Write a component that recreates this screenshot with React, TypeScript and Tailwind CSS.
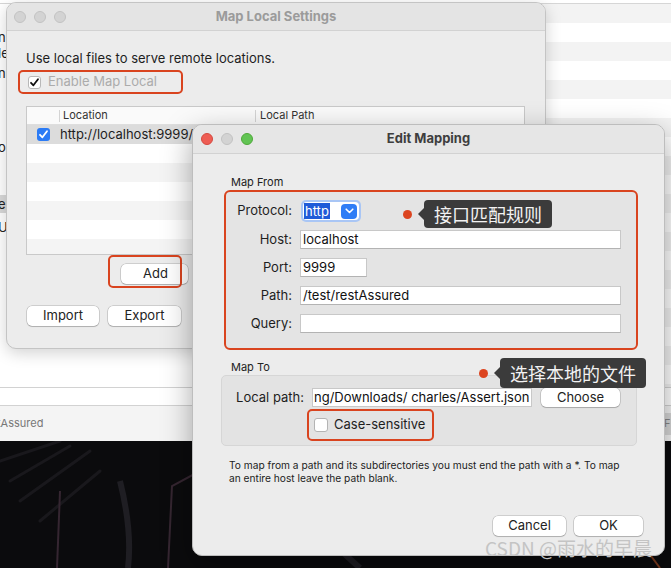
import React from "react";

const RED = "border-[#d9441f]";

function MacButton({ label, className }: { label: string; className: string }) {
  return (
    <div
      className={`flex items-center justify-center rounded-[5px] bg-white text-[13px] text-[#222] shadow-[0_0_0_0.5px_rgba(0,0,0,0.25),0_1px_1px_rgba(0,0,0,0.15)] ${className}`}
    >
      {label}
    </div>
  );
}

function CheckMark({ color }: { color: string }) {
  return (
    <svg width="11" height="11" viewBox="0 0 11 11">
      <path d="M2 5.8 L4.4 8.3 L9 2.2" fill="none" stroke={color} strokeWidth="1.8" strokeLinecap="round" strokeLinejoin="round" />
    </svg>
  );
}

function BackgroundApp() {
  const stripes = Array.from({ length: 21 });
  return (
    <div className="absolute inset-0 flex flex-col">
      <div className="h-[4px] shrink-0 border-b border-[#d6d6d6] bg-white" />
      <div className="flex h-[383px] shrink-0 overflow-hidden">
        <div className="relative w-[200px] shrink-0 bg-white text-[13px] leading-[16px] text-[#222]">
          <div className="flex flex-col pt-[25px]">
            <span className="-ml-[2px] h-[16px]">n</span>
            <span className="-ml-[2px] h-[16px]">le</span>
            <span className="-ml-[2px] mt-[4px] h-[16px]">n</span>
            <span className="-ml-[2px] mt-[58px] h-[16px]">o</span>
            <span className="-ml-[2px] mt-[40px] flex h-[18px] items-center bg-[#d9d9d9]">er</span>
            <span className="-ml-[2px] mt-[6px] h-[16px]">U:</span>
          </div>
        </div>
        <div className="flex flex-1 flex-col">
          {stripes.map((_, i) => (
            <div key={i} className={`h-[19px] shrink-0 ${i % 2 === 0 ? "bg-[#f3f3f3]" : "bg-white"}`} />
          ))}
        </div>
      </div>
      <div className="h-[19px] shrink-0 border-y border-[#d2d2d2] bg-white" />
      <div className="relative flex h-[35px] shrink-0 items-center justify-between bg-[#f4f4f4] text-[11px] text-[#777]">
        <span className="-ml-[3px]">tAssured</span>
        <span className="flex h-[22px] w-[8px] items-center bg-[#d8d8d8] pl-[1px] text-[#888]">F</span>
      </div>
      <div className="relative flex-1 bg-[#0b0b0d]">
        <svg className="absolute inset-0" width="671" height="127" viewBox="0 0 671 127">
          <g stroke="#19181c" strokeWidth="3" fill="none" strokeLinecap="round">
            <path d="M10 40 L70 5" />
            <path d="M20 60 L90 10" />
            <path d="M0 20 L60 0" />
            <path d="M40 80 L100 30" />
            <path d="M220 40 C260 10 300 0 360 5" />
            <path d="M230 60 C270 30 320 20 380 30" />
            <path d="M250 80 C290 50 340 50 400 60" />
            <path d="M240 100 C270 80 300 90 330 110" />
            <path d="M260 30 L200 0" />
            <path d="M400 90 C440 60 480 50 540 60" />
            <path d="M420 110 C460 90 500 80 560 100" />
            <path d="M440 70 L500 30" />
            <path d="M460 60 L520 20" />
            <path d="M540 40 L600 10" />
            <path d="M560 60 L630 30" />
          </g>
          <g stroke="#1f1e23" strokeWidth="6" fill="none">
            <path d="M300 60 C320 90 340 110 360 127" />
            <path d="M120 40 C130 80 130 110 128 127" />
          </g>
          <g stroke="#352631" strokeWidth="2" fill="none">
            <path d="M57 127 L60 50" />
            <path d="M168 127 L172 45 L200 30" />
          </g>
          <path d="M640 100 L660 127" stroke="#7a3a1e" strokeWidth="2" />
        </svg>
      </div>
    </div>
  );
}

function MapLocalWindow() {
  const rows = Array.from({ length: 7 });
  return (
    <div className="absolute left-[6px] top-[2px] flex h-[347px] w-[540px] flex-col overflow-hidden rounded-[10px] border border-[#c4c4c4] bg-[#ececec] shadow-[0_4px_16px_rgba(0,0,0,0.18)]">
      <div className="relative flex h-[28px] shrink-0 items-center border-b border-[#d2d2d2] bg-[#e4e4e4] pl-[7px]">
        <div className="flex gap-[8px]">
          <span className="h-[12px] w-[12px] rounded-full border border-[#c2c2c2] bg-[#d3d3d3]" />
          <span className="h-[12px] w-[12px] rounded-full border border-[#c2c2c2] bg-[#d3d3d3]" />
          <span className="h-[12px] w-[12px] rounded-full border border-[#c2c2c2] bg-[#d3d3d3]" />
        </div>
        <div className="absolute inset-0 flex items-center justify-center text-[13px] font-bold text-[#9b9b9b]">
          Map Local Settings
        </div>
      </div>
      <div className="flex flex-col pl-[19px]">
        <div className="mt-[19px] h-[16px] text-[13px] leading-[16px] text-[#1e1e1e]">
          Use local files to serve remote locations.
        </div>
        <div className={`-ml-[8px] mt-[4px] flex h-[24px] w-[165px] items-center rounded-[5px] border-2 ${RED} pl-[8px]`}>
          <span className="flex h-[13px] w-[13px] items-center justify-center rounded-[3px] border border-[#b8b8b8] bg-white">
            <CheckMark color="#111" />
          </span>
          <span className="ml-[7px] text-[13px] text-[#ababab]">Enable Map Local</span>
        </div>
        <div className="mt-[12px] flex h-[149px] w-[499px] flex-col overflow-hidden border border-[#c9c9c9] bg-white">
          <div className="flex h-[18px] shrink-0 items-center border-b border-[#dedede] bg-[#fafafa] text-[11px] text-[#333]">
            <span className="h-[12px] w-[33px] border-r border-[#d4d4d4]" />
            <span className="flex h-[12px] w-[196px] items-center border-r border-[#d4d4d4] pl-[3px]">Location</span>
            <span className="pl-[4px]">Local Path</span>
          </div>
          <div className="flex h-[19px] shrink-0 items-center bg-[#dcdcdc] text-[13px] text-[#1e1e1e]">
            <span className="flex w-[33px] justify-center">
              <span className="flex h-[13px] w-[13px] items-center justify-center rounded-[3px] bg-[#2b7bf5]">
                <CheckMark color="#fff" />
              </span>
            </span>
            <span className="whitespace-nowrap">http://localhost:9999/test/restAssured</span>
          </div>
          {rows.map((_, i) => (
            <div key={i} className={`h-[19px] shrink-0 ${i % 2 === 0 ? "bg-white" : "bg-[#f4f4f4]"}`} />
          ))}
        </div>
        <div className="relative h-[33px] shrink-0">
          <div className="pl-[95px] pt-[9px]">
            <MacButton label="Add" className="h-[20px] w-[67px] pl-[2px]" />
          </div>
          <div className={`absolute left-[82px] top-0 h-[33px] w-[74px] rounded-[5px] border-2 ${RED}`} />
        </div>
        <div className="ml-[1px] mt-[18px] flex gap-[9px]">
          <MacButton label="Import" className="h-[20px] w-[72px]" />
          <MacButton label="Export" className="h-[20px] w-[73px]" />
        </div>
      </div>
    </div>
  );
}

function FieldRow({ label, width, value }: { label: string; width: string; value: string }) {
  return (
    <div className="flex h-[19px] items-center">
      <span className="w-[66px] text-right text-[13px] text-[#1e1e1e]">{label}</span>
      <div
        className={`ml-[8px] flex h-[19px] items-center border border-[#c8c8c8] border-b-[#b3b3b3] bg-white pl-[2px] text-[13px] text-[#111] ${width}`}
      >
        {value}
      </div>
    </div>
  );
}

function EditMappingWindow() {
  return (
    <div className="absolute left-[192px] top-[124px] flex h-[432px] w-[473px] flex-col overflow-hidden rounded-[10px] border border-[#bdbdbd] bg-[#ececec] shadow-[0_10px_30px_rgba(0,0,0,0.35)]">
      <div className="relative flex h-[29px] shrink-0 items-center border-b border-[#d2d2d2] bg-[#e6e6e6] pl-[8px]">
        <div className="flex gap-[8px]">
          <span className="h-[12px] w-[12px] rounded-full border border-[#d4493f] bg-[#ee5d54]" />
          <span className="h-[12px] w-[12px] rounded-full border border-[#c2c2c2] bg-[#d3d3d3]" />
          <span className="h-[12px] w-[12px] rounded-full border border-[#4fa83a] bg-[#62c454]" />
        </div>
        <div className="absolute inset-0 flex items-center justify-center text-[13px] font-bold text-[#3e3e3e]">
          Edit Mapping
        </div>
      </div>
      <div className="flex flex-col">
        <div className="ml-[38px] mt-[22px] h-[13px] text-[11px] leading-[13px] text-[#222]">Map From</div>
        <div className={`ml-[31px] mt-[1px] flex h-[160px] w-[414px] flex-col rounded-[6px] border-2 ${RED} bg-[#e4e4e4] pt-[8px]`}>
          <div className="flex h-[22px] items-center">
            <span className="w-[66px] text-right text-[13px] text-[#1e1e1e]">Protocol:</span>
            <div className="ml-[9px] flex h-[22px] w-[60px] items-center rounded-[5px] bg-[#a9c6f5] p-[2px]">
              <div className="flex h-[18px] w-full items-center rounded-[4px] bg-white pl-[1px] pr-[2px]">
                <span className="flex h-[16px] items-center bg-[#1f5bd8] px-[1px] text-[13px] leading-[16px] text-white">
                  http
                </span>
                <span className="ml-auto flex h-[15px] w-[16px] items-center justify-center rounded-[4px] bg-[#2f7df6]">
                  <svg width="9" height="6" viewBox="0 0 9 6">
                    <path d="M1.2 1.2 L4.5 4.5 L7.8 1.2" fill="none" stroke="#fff" strokeWidth="1.6" strokeLinecap="round" strokeLinejoin="round" />
                  </svg>
                </span>
              </div>
            </div>
          </div>
          <div className="mt-[8px] flex flex-col gap-[9px]">
            <FieldRow label="Host:" width="w-[321px]" value="localhost" />
            <FieldRow label="Port:" width="w-[67px]" value="9999" />
            <FieldRow label="Path:" width="w-[321px]" value="/test/restAssured" />
            <FieldRow label="Query:" width="w-[321px]" value="" />
          </div>
        </div>
        <div className="ml-[38px] mt-[11px] h-[13px] text-[11px] leading-[13px] text-[#222]">Map To</div>
        <div className="ml-[28px] mt-[1px] flex h-[71px] w-[416px] flex-col rounded-[5px] border border-[#d6d6d6] bg-[#e3e3e3] pt-[12px]">
          <div className="flex h-[19px] items-center">
            <span className="w-[82px] text-right text-[13px] text-[#1e1e1e]">Local path:</span>
            <div className="ml-[8px] flex h-[19px] w-[220px] items-center overflow-hidden whitespace-nowrap border border-[#c8c8c8] bg-white pl-[1px] text-[13px] text-[#111]">
              ng/Downloads/ charles/Assert.json
            </div>
            <MacButton label="Choose" className="ml-[9px] h-[19px] w-[79px]" />
          </div>
          <div className={`ml-[85px] mt-[2px] flex h-[32px] w-[127px] items-center rounded-[5px] border-2 ${RED} pl-[5px]`}>
            <span className="h-[14px] w-[14px] rounded-[3px] border border-[#b4b4b4] bg-white" />
            <span className="ml-[6px] text-[13px] text-[#1e1e1e]">Case-sensitive</span>
          </div>
        </div>
        <div className="ml-[36px] mt-[13px] text-[10.2px] leading-[13px] text-[#222]">
          <div>To map from a path and its subdirectories you must end the path with a *. To map</div>
          <div>an entire host leave the path blank.</div>
        </div>
        <div className="mr-[21px] mt-[31px] flex justify-end gap-[8px]">
          <MacButton label="Cancel" className="h-[20px] w-[73px]" />
          <MacButton label="OK" className="h-[20px] w-[69px]" />
        </div>
      </div>
    </div>
  );
}

function Tooltip({ text, className }: { text: string; className: string }) {
  return (
    <div className={`absolute flex items-center ${className}`}>
      <span className="h-[9px] w-[9px] rounded-full bg-[#dc4520]" />
      <span className="ml-[6px] h-0 w-0 border-y-[6px] border-r-[6px] border-y-transparent border-r-[#3b3b3b]" />
      <div className="flex h-full items-center rounded-[4px] bg-[#3b3b3b] px-[10px] font-['Noto_Sans_CJK_SC',sans-serif] text-[18px] text-[#f2f2f2]">
        {text}
      </div>
    </div>
  );
}

export default function App() {
  return (
    <div className="relative h-[568px] w-[671px] overflow-hidden bg-white font-['Inter','Noto_Sans_CJK_SC',sans-serif]">
      <BackgroundApp />
      <MapLocalWindow />
      <EditMappingWindow />
      <Tooltip text="接口匹配规则" className="left-[403px] top-[200px] h-[28px]" />
      <Tooltip text="选择本地的文件" className="left-[479px] top-[358px] h-[30px]" />
      <div className="absolute left-[485px] top-[536px] font-['Noto_Sans_CJK_SC',sans-serif] text-[19px] leading-[24px] text-[#c4c4c4]">
        CSDN @雨水的早晨
      </div>
    </div>
  );
}
